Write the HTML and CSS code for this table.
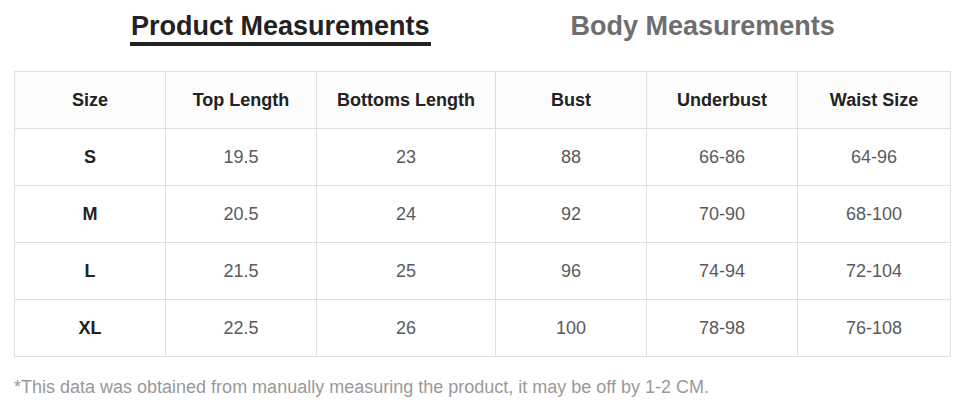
FILE: index.html
```html
<!DOCTYPE html>
<html>
<head>
<meta charset="utf-8">
<link rel="stylesheet" href="styles.css">
</head>
<body>
<div class="tabs">
  <div class="tab active">Product Measurements</div>
  <div class="tab">Body Measurements</div>
</div>
<table class="size-table">
  <colgroup>
    <col class="c1"><col class="c2"><col class="c3"><col class="c4"><col class="c5"><col class="c6">
  </colgroup>
  <thead>
    <tr><th>Size</th><th>Top Length</th><th>Bottoms Length</th><th>Bust</th><th>Underbust</th><th>Waist Size</th></tr>
  </thead>
  <tbody>
    <tr><th>S</th><td>19.5</td><td>23</td><td>88</td><td>66-86</td><td>64-96</td></tr>
    <tr><th>M</th><td>20.5</td><td>24</td><td>92</td><td>70-90</td><td>68-100</td></tr>
    <tr><th>L</th><td>21.5</td><td>25</td><td>96</td><td>74-94</td><td>72-104</td></tr>
    <tr><th>XL</th><td>22.5</td><td>26</td><td>100</td><td>78-98</td><td>76-108</td></tr>
  </tbody>
</table>
<p class="note">*This data was obtained from manually measuring the product, it may be off by 1-2 CM.</p>
</body>
</html>
```
FILE: styles.css
```css
html, body {
  margin: 0;
  padding: 0;
  background: #ffffff;
  font-family: "Liberation Sans", Arial, sans-serif;
}

.tabs {
  display: flex;
  align-items: flex-start;
  gap: 139px;
  padding: 12px 0 0 130px;
  height: 34px;
  margin-bottom: 25px;
}

.tab {
  font-size: 27px;
  font-weight: bold;
  line-height: 29px;
  color: #6e6e6e;
  padding: 0 1px 1px;
  border-bottom: 4px solid transparent;
}

.tab.active {
  color: #222222;
  border-bottom-color: #222222;
}

.size-table {
  margin-left: 14px;
  width: 936px;
  border-collapse: collapse;
  table-layout: fixed;
  font-size: 18px;
}

.c1 { width: 151px; }
.c2 { width: 151px; }
.c3 { width: 179px; }
.c4 { width: 151px; }
.c5 { width: 151px; }
.c6 { width: 153px; }

.size-table th,
.size-table td {
  border: 1px solid #e0e0e0;
  height: 56px;
  padding: 0;
  text-align: center;
  vertical-align: middle;
}

.size-table th {
  color: #222222;
  font-weight: bold;
}

.size-table thead th {
  background: #fcfcfc;
}

.size-table td {
  color: #5a5a5a;
}

.note {
  margin: 20px 0 0 14px;
  font-size: 18px;
  line-height: 20px;
  color: #999999;
}
```
